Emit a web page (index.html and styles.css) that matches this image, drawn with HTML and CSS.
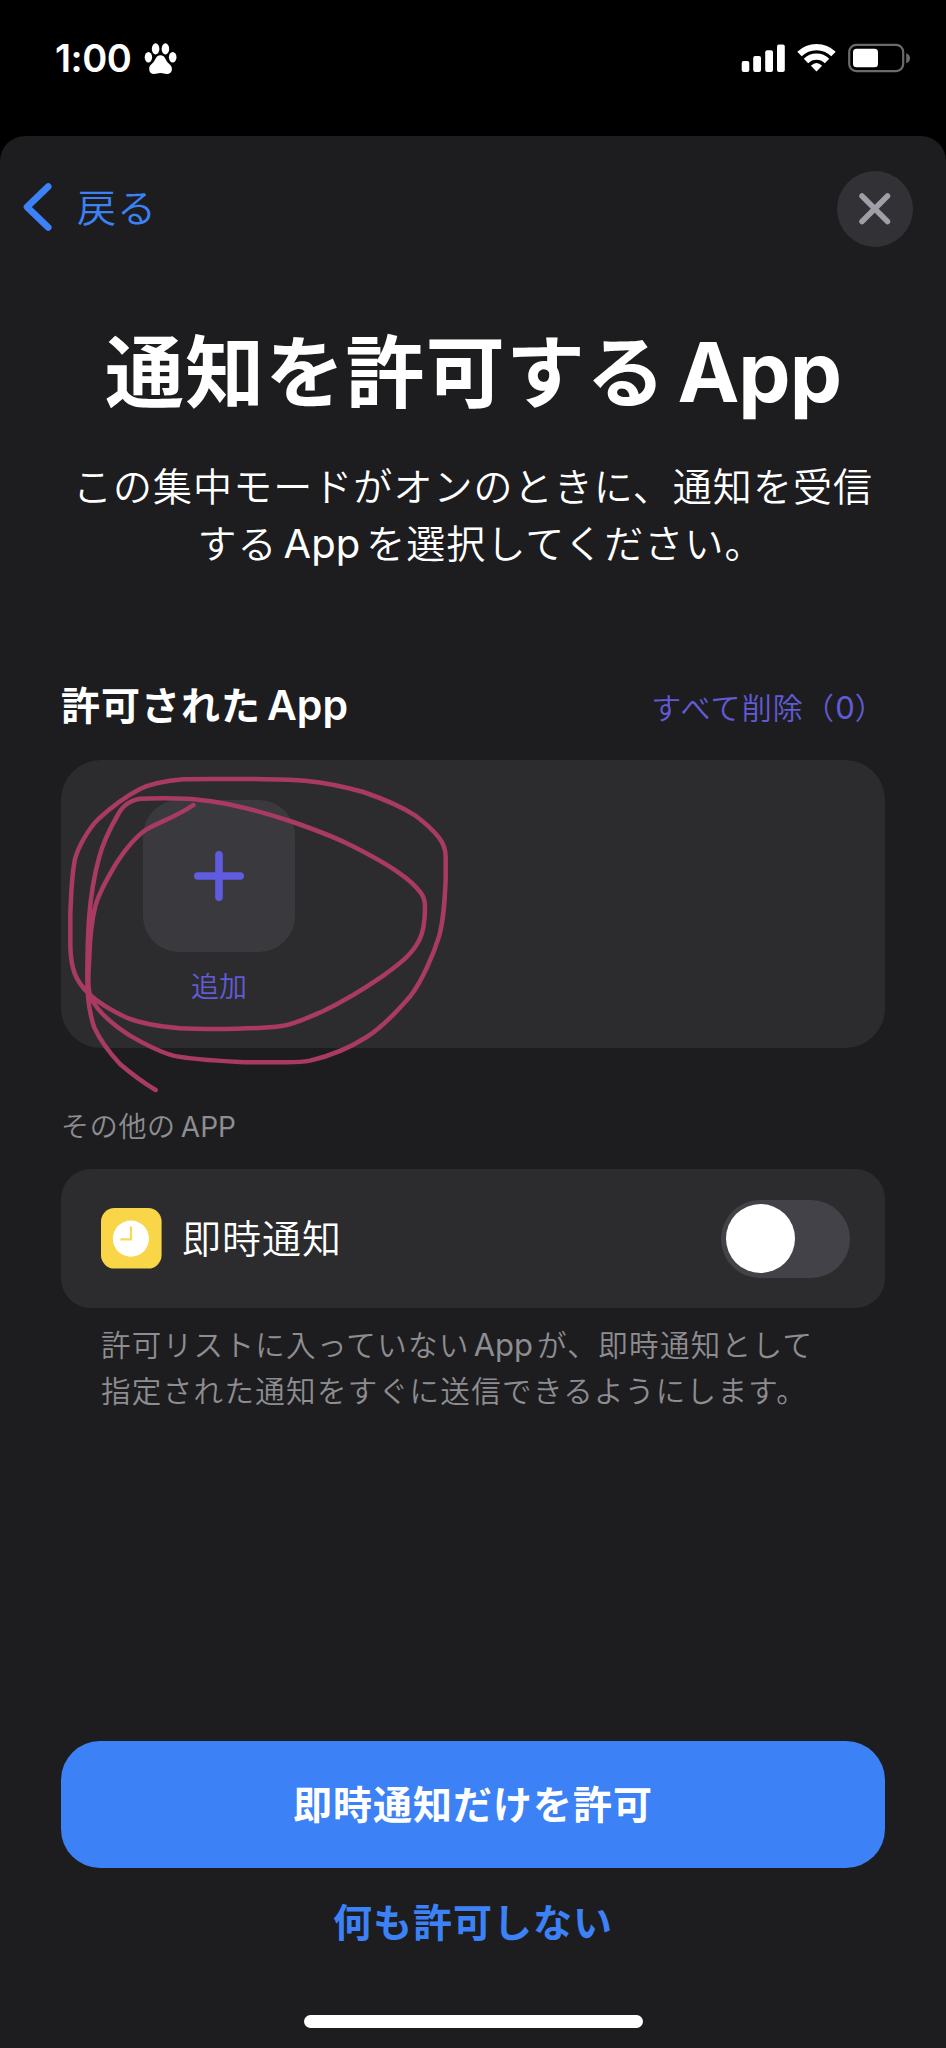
FILE: index.html
```html
<!DOCTYPE html>
<html lang="ja">
<head>
<meta charset="utf-8">
<title>通知を許可するApp</title>
<link rel="stylesheet" href="styles.css">
</head>
<body>
<header class="status">
  <div class="status-left">
    <span class="clock">1:00</span>
    <svg class="paw" width="34" height="34" viewBox="144 42 34 34" fill="#fff">
      <ellipse cx="148.4" cy="57.2" rx="3.7" ry="5.3"/>
      <ellipse cx="155.6" cy="48.9" rx="3.8" ry="5.6"/>
      <ellipse cx="165.4" cy="48.9" rx="3.8" ry="5.6"/>
      <ellipse cx="172.7" cy="57.2" rx="3.8" ry="5.3"/>
      <path d="M160.4 55.3C165 55.3 165.5 60 167.5 62.2C169.5 64.3 171.9 65.500 171.9 69C171.900 72.300 169.800 74 166.700 74C164.500 74 163 73.100 160.400 73.100C157.800 73.100 156.500 74 154.200 74C151 74 149.200 72.300 149.200 69C149.200 65.500 151.400 64.300 153.400 62.200C155.400 60 156 55.300 160.400 55.300Z"/>
    </svg>
  </div>
  <svg class="status-right" width="172" height="32" viewBox="740 42 172 32">
    <g fill="#fff">
      <rect x="741.7" y="61" width="7.6" height="11" rx="2"/>
      <rect x="753.2" y="56" width="7.8" height="16" rx="2"/>
      <rect x="765.2" y="50.300" width="7.800" height="21.700" rx="2"/>
      <rect x="777" y="44.600" width="7.800" height="27.400" rx="2"/>
      <path d="M816.5 71.500L810.900 65.800Q816.500 60.300 822.100 65.800Z"/>
    </g>
    <g fill="none" stroke="#fff" stroke-width="6.300">
      <path d="M799.500 54.100A24.200 24.200 0 0 1 833.500 54.100"/>
      <path d="M806 60.900A14.900 14.900 0 0 1 827 60.900"/>
    </g>
    <rect x="849.200" y="44.900" width="54" height="26.200" rx="7" fill="none" stroke="#6b6b6b" stroke-width="2.200"/>
    <rect x="853" y="48.800" width="25" height="18.400" rx="3.500" fill="#fff"/>
    <path d="M906.200 53.200Q910 54.500 910 58.200T906.200 63.200Z" fill="#6b6b6b"/>
  </svg>
</header>

<main class="sheet">
  <nav class="nav">
    <a class="back">
      <svg width="32" height="52" viewBox="0 0 32 52" fill="none" stroke="#3c82f6" stroke-width="6.600" stroke-linecap="round" stroke-linejoin="round"><path d="M26.300 5.500L5 26L26.300 46.500"/></svg>
      <span>戻る</span>
    </a>
    <span class="close">
      <svg width="34" height="34" viewBox="0 0 34 34" stroke="#a09fa7" stroke-width="5.500" stroke-linecap="round"><path d="M4 4L29.500 29.500M29.500 4L4 29.500"/></svg>
    </span>
  </nav>

  <h1 class="title">通知を許可する<span class="latin">App</span></h1>
  <p class="lead">この集中モードがオンのときに、通知を受信<br><span class="lead-end">する<span class="latin">App</span>を選択してください。</span></p>

  <div class="section-head">
    <h2>許可された<span class="latin">App</span></h2>
    <a class="clear">すべて削除（<span class="latin">0</span>）</a>
  </div>

  <section class="apps">
    <div class="add">
      <span class="add-tile">
        <svg width="52" height="52" viewBox="0 0 52 52" stroke="#5f5ce0" stroke-width="7.600" stroke-linecap="round"><path d="M4.800 26H47.200M26 4.800V47.200"/></svg>
      </span>
      <span class="add-label">追加</span>
    </div>
    <svg class="scribble" width="417" height="347" viewBox="63 300 1251 1041" fill="none" stroke="#a93a62" stroke-width="13.500" stroke-linecap="round" stroke-linejoin="round">
      <path d="M460 435C410 470 360 485 320 508C285 530 255 570 230 608C205 650 180 690 167 735C155 780 150 830 148 890C146 940 140 985 154 1015C175 1058 220 1095 270 1127C315 1153 355 1175 400 1187C460 1200 540 1203 620 1207L740 1207C765 1207 790 1206 810 1202C870 1188 930 1163 980 1131C1030 1100 1075 1050 1112 1007C1145 965 1180 885 1197 830C1212 775 1214 720 1217 660L1217 590C1217 565 1210 550 1197 533C1175 505 1150 485 1125 466C1080 437 1025 415 970 396C915 380 855 368 795 362C745 358 690 358 640 357H520C490 357 460 357 430 358C385 362 340 368 300 387C260 408 210 445 175 477C145 507 115 560 105 597C94 650 94 700 91 760V860C93 925 105 960 145 1000C180 1033 215 1052 260 1073C310 1093 360 1100 420 1105C480 1108 540 1107 590 1106C640 1105 690 1103 725 1098C760 1094 800 1075 850 1053C915 1022 975 985 1030 947C1080 910 1115 885 1138 840C1152 812 1155 775 1155 740C1155 722 1151 710 1142 698C1125 676 1105 658 1080 641C1030 605 975 577 920 550C865 523 805 502 750 483C680 460 610 440 540 428C505 422 475 418 440 416C395 414 345 414 300 416C280 418 250 432 235 462C210 505 190 545 178 590C160 655 152 710 147 775C143 835 142 900 142 960C142 1010 148 1060 163 1103C180 1140 210 1180 240 1212C275 1242 310 1268 347 1290"/>
    </svg>
  </section>

  <h3 class="caption">その他の<span class="latin">APP</span></h3>
  <section class="row">
    <svg class="row-icon" width="61" height="61" viewBox="0 0 61 61">
      <rect width="60.600" height="60.600" rx="13.500" fill="#f8d648"/>
      <circle cx="29.900" cy="30.600" r="18.100" fill="#fff"/>
      <path d="M30 18.500V31.400H19.500" fill="none" stroke="#f5d95f" stroke-width="2.400"/>
    </svg>
    <span class="row-label">即時通知</span>
    <span class="toggle"><span class="knob"></span></span>
  </section>
  <p class="note">許可リストに入っていない<span class="latin">App</span>が、即時通知として<br>指定された通知をすぐに送信できるようにします。</p>

  <footer class="actions">
    <button class="primary">即時通知だけを許可</button>
    <button class="secondary">何も許可しない</button>
    <div class="home"></div>
  </footer>
</main>
</body>
</html>
```

FILE: styles.css
```css
* { box-sizing: border-box; margin: 0; padding: 0; }
body {
  width: 946px;
  height: 2048px;
  background: #000;
  color: #fff;
  font-family: "Noto Sans CJK JP", sans-serif;
  font-weight: 350;
  display: flex;
  flex-direction: column;
  overflow: hidden;
}
svg { display: block; flex: none; }
.latin { font-family: Inter, sans-serif; letter-spacing: 0; line-height: 0; }

.status {
  height: 136px;
  padding: 42px 34px 0 55px;
  display: flex;
  justify-content: space-between;
  align-items: flex-start;
}
.status-left { display: flex; }
.clock {
  width: 89px;
  font: 600 38px/33px Inter, sans-serif;
  letter-spacing: -0.5px;
  white-space: nowrap;
}

.sheet {
  height: 1912px;
  background: #1d1d1f;
  border-radius: 25px 25px 0 0;
  display: flex;
  flex-direction: column;
}
.nav {
  height: 110px;
  padding: 35px 33px 0 22px;
  display: flex;
  justify-content: space-between;
  align-items: flex-start;
}
.back {
  height: 72px;
  display: flex;
  align-items: center;
  gap: 23px;
  color: #3c82f6;
  font-size: 39px;
  letter-spacing: 1px;
}
.back span { padding-bottom: 5px; }
.close {
  width: 76px;
  height: 76px;
  border-radius: 50%;
  background: #323136;
  display: flex;
  align-items: center;
  justify-content: center;
}

.title {
  height: 124px;
  margin-top: 60px;
  font-size: 79px;
  line-height: 124px;
  font-weight: 700;
  letter-spacing: 1.2px;
  text-align: center;
  white-space: nowrap;
}
.title .latin { font-size: 83px; letter-spacing: -1px; margin-left: 11px; }
.lead {
  margin-top: 26px;
  font-size: 39px;
  line-height: 56.500px;
  letter-spacing: 1.070px;
  text-align: center;
  white-space: nowrap;
}
.lead-end { padding-left: 16px; }
.lead .latin { font-size: 40px; margin: 0 6px; font-weight: 400; }

.section-head {
  height: 87px;
  margin-top: 104px;
  padding: 0 60px 0 61px;
  display: flex;
  justify-content: space-between;
  line-height: 60px;
  white-space: nowrap;
}
.section-head h2 { font-size: 39px; font-weight: 700; letter-spacing: 1px; }
.section-head h2 .latin { font-size: 41px; font-weight: 600; margin-left: 6px; }
.clear { color: #625bd6; font-size: 30px; letter-spacing: 1.200px; padding-top: 3px; }
.clear .latin { font-weight: 400; font-size: 31px; }

.apps {
  position: relative;
  width: 824px;
  height: 288px;
  margin-left: 61px;
  padding: 40px 82px;
  border-radius: 40px;
  background: #2c2c2e;
}
.add { width: 152px; display: flex; flex-direction: column; align-items: center; }
.add-tile {
  width: 152px;
  height: 152px;
  border-radius: 36px;
  background: #3a393e;
  display: flex;
  align-items: center;
  justify-content: center;
}
.add-label { margin-top: 12px; font-size: 28px; line-height: 42px; color: #625bd6; }
.scribble { position: absolute; left: 0; top: 0; overflow: visible; }

.caption {
  height: 121px;
  padding: 57px 0 0 61px;
  font-size: 28px;
  line-height: 40px;
  font-weight: 350;
  letter-spacing: 0.700px;
  color: #8d8d92;
}
.caption .latin { font-weight: 400; margin-left: 5px; }
.row {
  width: 824px;
  height: 139px;
  margin-left: 61px;
  padding: 0 35px 0 40px;
  border-radius: 30px;
  background: #2c2c2e;
  display: flex;
  align-items: center;
}
.row-label { flex: 1; margin-left: 20px; padding-bottom: 5px; font-size: 39px; letter-spacing: 1px; }
.toggle {
  width: 129px;
  height: 78px;
  padding: 4.500px 5px;
  border-radius: 39px;
  background: #434248;
}
.knob { display: block; width: 69px; height: 69px; border-radius: 50%; background: #fff; }
.note {
  padding: 13px 0 0 101px;
  font-size: 29.500px;
  line-height: 45.500px;
  letter-spacing: 1.350px;
  color: #8d8d92;
  white-space: nowrap;
}
.note .latin { font-size: 31px; font-weight: 400; margin: 0 4px; }

.actions { margin-top: auto; height: 307px; display: flex; flex-direction: column; align-items: center; }
.actions button {
  border: 0;
  font: 700 39px "Noto Sans CJK JP", sans-serif;
  letter-spacing: 1px;
  padding-bottom: 5px;
}
.primary { width: 824px; height: 127px; border-radius: 39px; background: #3c82f6; color: #fff; }
.secondary { height: 80px; margin-top: 14px; background: none; color: #3c82f6; }
.home { width: 339px; height: 13px; margin-top: 53px; border-radius: 7px; background: #fff; }
```
